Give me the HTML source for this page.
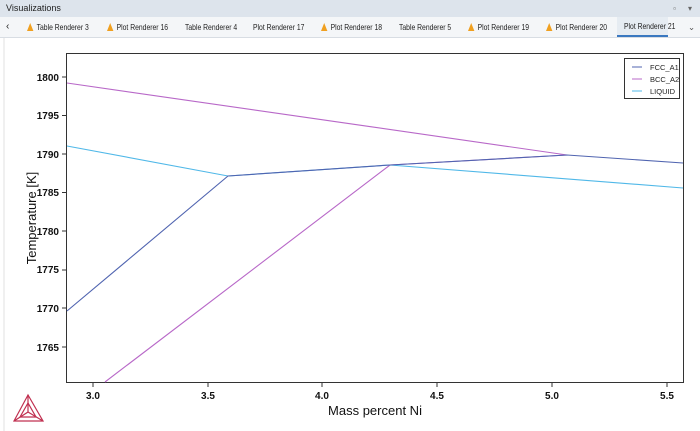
<!DOCTYPE html>
<html><head><style>
body{margin:0;width:700px;height:431px;overflow:hidden;background:#fff;font-family:"Liberation Sans",sans-serif;position:relative}
.title{position:absolute;left:0;top:0;width:700px;height:17px;background:#dde4ec;font-size:9px;color:#222;line-height:17px}
.tabs{position:absolute;left:0;top:17px;width:700px;height:20px;background:#f4f6f8;border-bottom:1px solid #d8dde3;font-size:8.5px;color:#222}
.tab{position:absolute;top:0;height:20px;line-height:20px;white-space:nowrap;transform:scaleX(0.8);transform-origin:0 0}
.w{display:inline-block;width:0;height:0;border-left:4.5px solid transparent;border-right:4.5px solid transparent;border-bottom:8px solid #f0a020;margin-right:4px;vertical-align:-1px}
</style></head><body>
<div class="title"><span style="margin-left:6px">Visualizations</span><span style="position:absolute;right:24px;font-size:8px;color:#666">▫</span><span style="position:absolute;right:8px;font-size:8px;color:#666">▾</span></div>
<div class="tabs">
<div style="position:absolute;left:617px;top:0;width:51px;height:18px;background:#e6ecf2;border-bottom:2px solid #3a78c0"></div>
<div class="tab" style="left:6px;transform:none;font-size:10px">‹</div>
<div class="tab" style="left:27px"><i class="w"></i>Table Renderer 3</div>
<div class="tab" style="left:107px"><i class="w"></i>Plot Renderer 16</div>
<div class="tab" style="left:185px">Table Renderer 4</div>
<div class="tab" style="left:253px">Plot Renderer 17</div>
<div class="tab" style="left:321px"><i class="w"></i>Plot Renderer 18</div>
<div class="tab" style="left:399px">Table Renderer 5</div>
<div class="tab" style="left:468px"><i class="w"></i>Plot Renderer 19</div>
<div class="tab" style="left:546px"><i class="w"></i>Plot Renderer 20</div>
<div class="tab" style="left:624px;line-height:19px">Plot Renderer 21</div>
<div class="tab" style="left:688px;color:#555;transform:none">⌄</div>
</div>
<svg width="700" height="431" style="position:absolute;left:0;top:0" font-family="Liberation Sans, sans-serif">
<line x1="4" y1="38" x2="4" y2="431" stroke="#e0e0e0"/>
<rect x="66.5" y="53.5" width="617" height="329" fill="none" stroke="#333" stroke-width="1"/>
<g font-size="10" fill="#111" font-weight="bold" text-anchor="end">
<text x="59" y="81">1800</text><text x="59" y="119">1795</text><text x="59" y="158">1790</text><text x="59" y="196">1785</text><text x="59" y="235">1780</text><text x="59" y="273">1775</text><text x="59" y="312">1770</text><text x="59" y="351">1765</text>
</g>
<g stroke="#333"><line x1="62" y1="77" x2="66" y2="77"/><line x1="62" y1="115.5" x2="66" y2="115.5"/><line x1="62" y1="154" x2="66" y2="154"/><line x1="62" y1="192.5" x2="66" y2="192.5"/><line x1="62" y1="231" x2="66" y2="231"/><line x1="62" y1="270" x2="66" y2="270"/><line x1="62" y1="308" x2="66" y2="308"/><line x1="62" y1="347" x2="66" y2="347"/>
<line x1="93" y1="383" x2="93" y2="387"/><line x1="208" y1="383" x2="208" y2="387"/><line x1="322" y1="383" x2="322" y2="387"/><line x1="437" y1="383" x2="437" y2="387"/><line x1="552" y1="383" x2="552" y2="387"/><line x1="667" y1="383" x2="667" y2="387"/></g>
<g font-size="10" fill="#111" font-weight="bold" text-anchor="middle">
<text x="93" y="399">3.0</text><text x="208" y="399">3.5</text><text x="322" y="399">4.0</text><text x="437" y="399">4.5</text><text x="552" y="399">5.0</text><text x="667" y="399">5.5</text></g>
<text x="375" y="415" font-size="13" text-anchor="middle" fill="#111">Mass percent Ni</text>
<text transform="translate(36,218) rotate(-90)" font-size="13" text-anchor="middle" fill="#111">Temperature [K]</text>
<g fill="none" stroke-width="1.1">
<polyline points="67,83 567,155" stroke="#b868c8"/>
<polyline points="105,382 390,165 567,155" stroke="#b868c8"/>
<polyline points="67,146 228,176 390,165 683,188" stroke="#50b8e8"/>
<polyline points="67,311 228,176 390,165 567,155 683,163" stroke="#5064b0"/>
</g>
<rect x="624.5" y="58.5" width="55" height="40" fill="#fff" stroke="#333"/>
<g font-size="7.5" fill="#222"><text x="650" y="70">FCC_A1</text><text x="650" y="82">BCC_A2</text><text x="650" y="94">LIQUID</text></g>
<line x1="632" y1="67" x2="642" y2="67" stroke="#5064b0"/><line x1="632" y1="79" x2="642" y2="79" stroke="#b868c8"/><line x1="632" y1="91" x2="642" y2="91" stroke="#50b8e8"/>
<g fill="none" stroke="#c03050" stroke-width="1.2"><polygon points="28,395 14,421 43,421"/><polyline points="28,395 28,412 14,421"/><line x1="28" y1="412" x2="43" y2="421"/><polygon points="28,403 20,417 36,417"/></g>
</svg>
</body></html>
